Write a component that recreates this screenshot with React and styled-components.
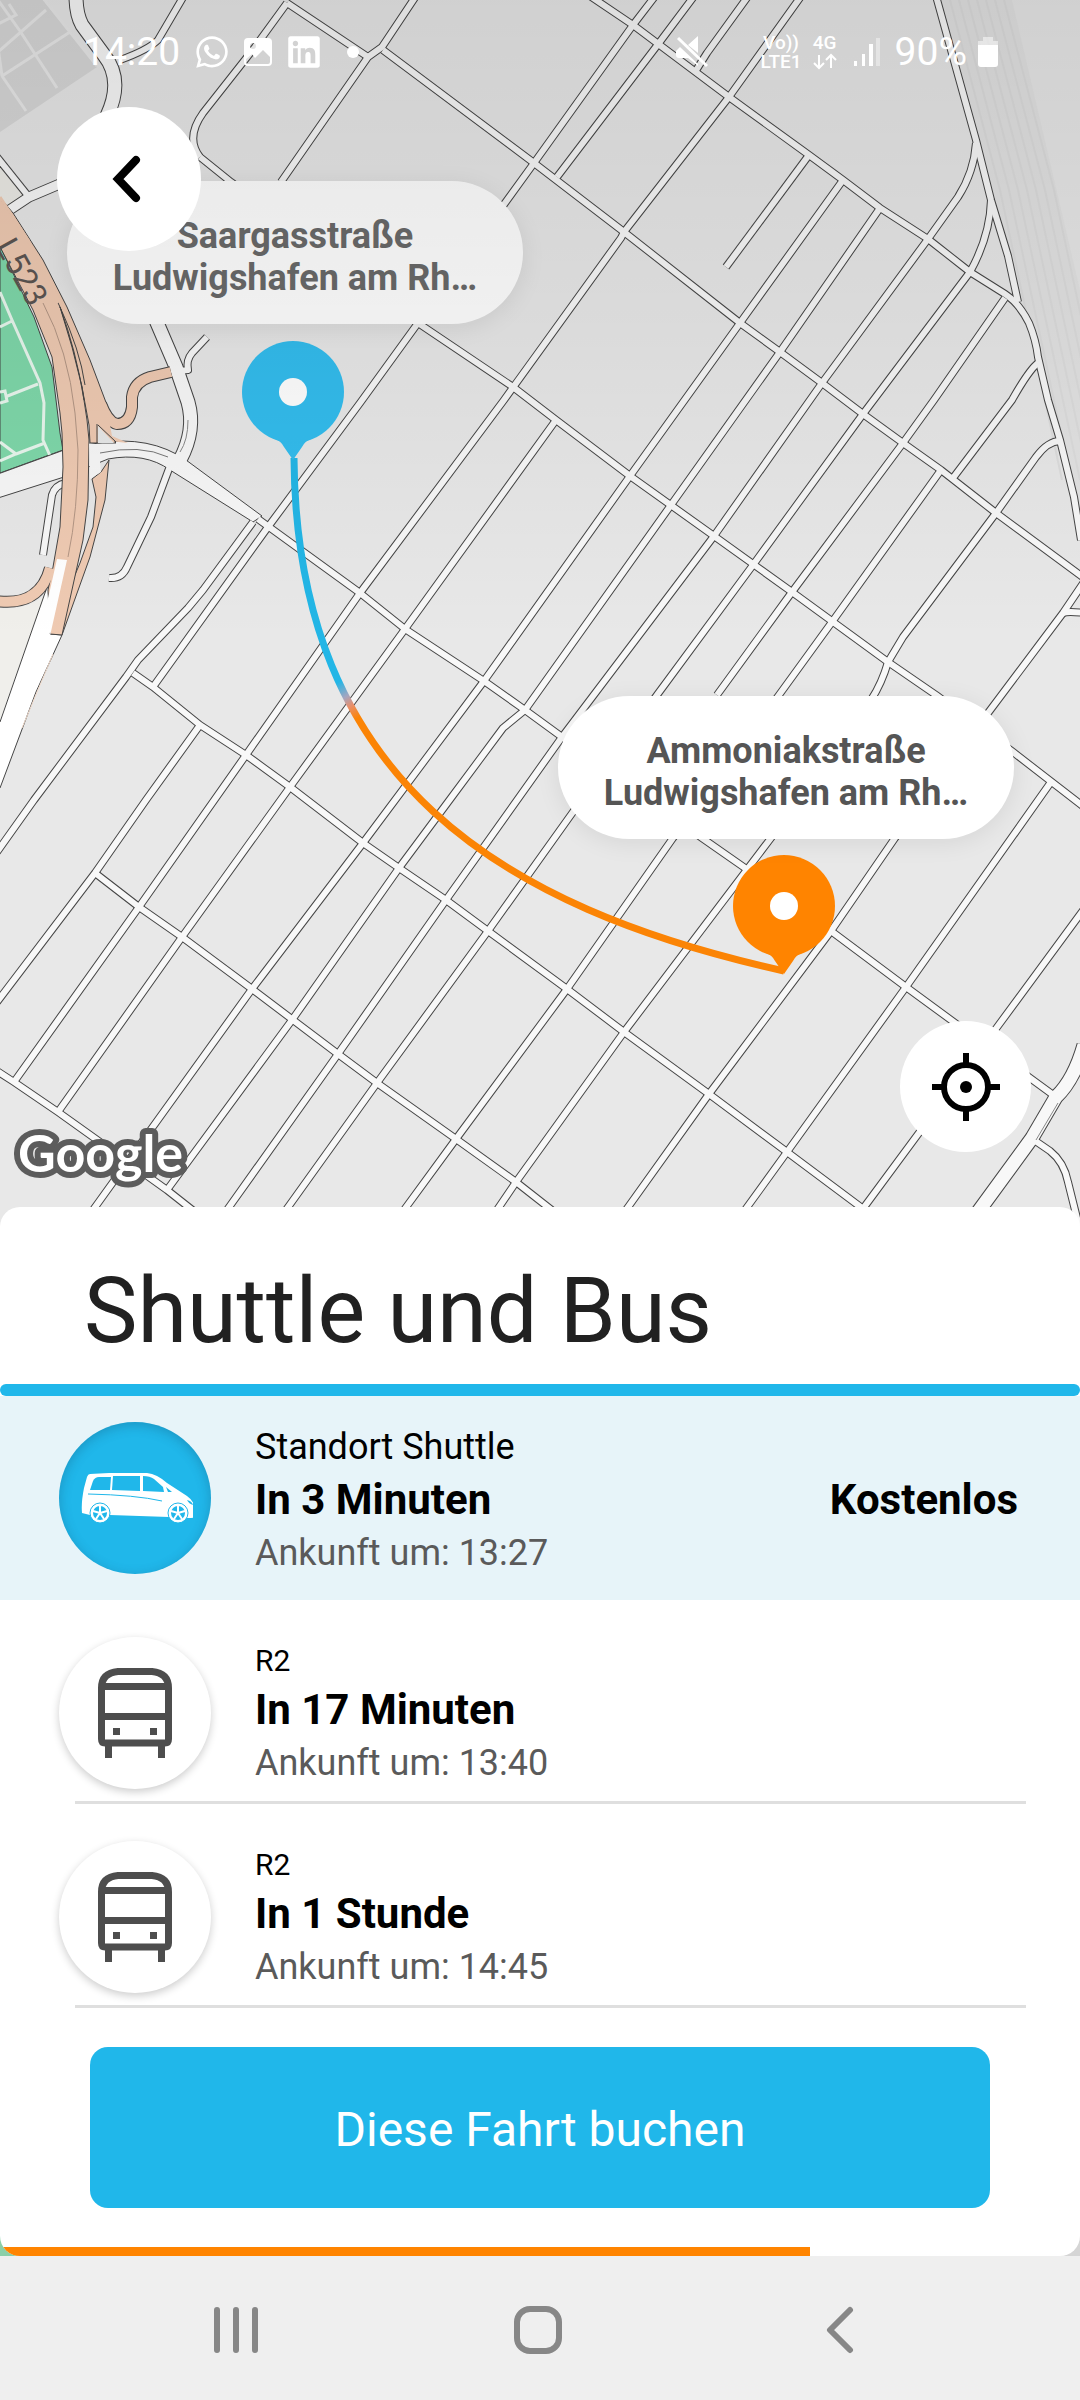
import React from 'react';
import styled, { createGlobalStyle } from 'styled-components';
import { FaLinkedin, FaWhatsapp } from 'react-icons/fa';

const GlobalStyle = createGlobalStyle`
  * {
    box-sizing: border-box;
  }
  body {
    margin: 0;
    font-family: Roboto, "Liberation Sans", sans-serif;
    background: #efefef;
  }
  button {
    border: none;
    padding: 0;
    font-family: inherit;
    cursor: pointer;
  }
`;

const Screen = styled.div`
  display: flex;
  flex-direction: column;
  min-height: 100vh;
`;

const MapArea = styled.section`
  position: relative;
  flex: 1;
  min-height: 1080px;
  overflow: hidden;
  background: #e7e8e8;
`;

const MapCanvas = styled.svg`
  position: absolute;
  top: 0;
  left: 0;
  width: 100%;
  height: 100%;
`;

const Shade = styled.div`
  position: absolute;
  top: 0;
  left: 0;
  right: 0;
  height: 640px;
  background: linear-gradient(rgba(0, 0, 0, 0.1), rgba(0, 0, 0, 0.06) 50%, rgba(0, 0, 0, 0));
`;

const PlaceLabel = styled.div`
  position: absolute;
  left: ${(props) => props.$x}px;
  top: ${(props) => props.$y}px;
  width: 456px;
  padding: 34px 40px 25px;
  border-radius: 72px;
  background: #fff;
  box-shadow: 0 4px 24px rgba(0, 0, 0, 0.08);
  color: ${(props) => (props.$dimmed ? '#6a6a6a' : '#555')};
  font-size: 36px;
  font-weight: 700;
  line-height: 42px;
  text-align: center;
  white-space: nowrap;
`;

const Overlay = styled.div`
  position: relative;
`;

const StatusBar = styled.header`
  display: flex;
  align-items: center;
  justify-content: space-between;
  height: 103px;
  padding: 0 82px 0 83px;
  color: #fff;
  font-size: 39px;
`;

const StatusGroup = styled.div`
  display: flex;
  align-items: center;
  gap: ${(props) => props.$gap}px;
`;

const Network = styled.div`
  display: flex;
  flex-direction: column;
  align-items: center;
  font-size: 19px;
  font-weight: 500;
  line-height: 19px;
`;

const BackButton = styled.button`
  display: flex;
  align-items: center;
  justify-content: center;
  width: 144px;
  height: 144px;
  margin: 4px 0 0 57px;
  border-radius: 50%;
  background: #fff;
`;

const LocateButton = styled.button`
  position: absolute;
  right: 49px;
  bottom: 79px;
  display: flex;
  align-items: center;
  justify-content: center;
  width: 131px;
  height: 131px;
  border-radius: 50%;
  background: #fff;
`;

const SheetBack = styled.div`
  margin-top: -24px;
  position: relative;
  background: linear-gradient(transparent 50%, #8bcfa8 50%) left / 50% no-repeat,
    linear-gradient(transparent 50%, #d5d5d5 50%) right / 50% no-repeat;
`;

const Sheet = styled.main`
  border-radius: 20px;
  overflow: hidden;
  background: #fff;
`;

const Title = styled.h1`
  margin: 0;
  padding: 52px 84px 20px;
  color: #212121;
  font-size: 90px;
  font-weight: 400;
  line-height: 105px;
`;

const Accent = styled.div`
  height: 12px;
  border-radius: 6px;
  background: #20b7ea;
`;

const RideList = styled.ul`
  list-style: none;
  margin: 0;
  padding: 0;
`;

const RideItem = styled.li`
  background: ${(props) => (props.$active ? '#e7f4f9' : '#fff')};
  &::after {
    content: '';
    display: ${(props) => (props.$active ? 'none' : 'block')};
    height: 3px;
    margin: 0 54px 0 75px;
    background: #dfdfdf;
  }
`;

const RideButton = styled.button`
  display: flex;
  align-items: center;
  width: 100%;
  min-height: ${(props) => (props.$active ? 204 : 201)}px;
  padding: ${(props) => (props.$active ? '0 62px 0 59px' : '37px 62px 12px 59px')};
  background: none;
  color: #000;
  text-align: left;
`;

const RideIcon = styled.span`
  display: flex;
  align-items: center;
  justify-content: center;
  flex: none;
  width: 152px;
  height: 152px;
  margin-right: 44px;
  border-radius: 50%;
  background: ${(props) => (props.$active ? '#20b7ea' : '#fff')};
  box-shadow: ${(props) => (props.$active
    ? 'inset 0 3px 12px rgba(20, 70, 100, 0.3)'
    : '0 3px 8px rgba(0, 0, 0, 0.2)')};
`;

const RideText = styled.span`
  display: flex;
  flex-direction: column;
  flex: 1;
  padding-top: ${(props) => (props.$active ? 4 : 2)}px;
`;

const RideName = styled.span`
  font-size: ${(props) => (props.$active ? 36 : 30)}px;
  line-height: ${(props) => (props.$active ? 52 : 44)}px;
`;

const RideTime = styled.span`
  font-size: 42px;
  font-weight: 700;
  line-height: 54px;
`;

const RidePrice = styled(RideTime)`
  padding-top: 4px;
`;

const RideArrival = styled.span`
  color: #5a5a5a;
  font-size: 36px;
  line-height: 52px;
`;

const BookButton = styled.button`
  display: block;
  width: calc(100% - 180px);
  height: 161px;
  margin: 39px 90px;
  padding-top: 3px;
  border-radius: 18px;
  background: #20b7ea;
  color: #fff;
  font-size: 48px;
`;

const Progress = styled.div`
  width: 75%;
  height: 9px;
  background: #ff8400;
`;

const NavBar = styled.nav`
  display: flex;
  height: 144px;
  padding: 3px 89px 0 85px;
  background: #efefef;
`;

const NavButton = styled.button`
  display: flex;
  align-items: center;
  justify-content: center;
  flex: 1;
  background: none;
`;

const streets = [
  // north-west to south-east
  'M287 3L368 57M383 50L534 163L624 232L740 323L780 352L822 383L863 414L903 443L941 470L996 513L1084 578',
  'M590 -4L633 25L729 97L809 155L843 180L880 208L928 239L970 272L1005 294Q1019 303 1029 323Q1036 340 1038 357L1048 400L1060 440L1074 497L1081 540',
  'M200 157L231 182L418 323L513 387L556 420L630 476L714 536L792 592L888 662L936 695L1013 752L1084 807',
  'M258 519L360 593L405 629L484 681L525 710L562 737L702 838L745 868L831 931L906 987L1056 1097',
  'M133 673L153 687L200 725L246 755L290 787L363 843L399 868L446 900L488 931L567 989L624 1032L709 1094L787 1152L870 1214',
  'M95 873L139 907L182 937L252 989L338 1054L377 1083L456 1139L516 1182L590 1240',
  'M-3 1071L14 1082L58 1112L100 1142L167 1190L200 1216',
  // north-east to south-west
  'M185 -6L158 40Q148 50 120 60',
  'M287 3L255 47L203 113Q185 138 200 157',
  'M416 -4L382 47L368 57L281 182',
  'M656 -5L633 25L534 163L418 323L360 403L268 527L153 687',
  'M695 -5L659 43L557 177',
  'M749 -5L707 53L695 72',
  'M802 -5L729 97L624 232L621 238L504 400L360 593L246 755L139 907L14 1082',
  'M809 155L726 267',
  'M843 180L740 323L630 476L484 681L363 843L252 989L93 1210',
  'M556 420L405 629L290 787L182 937L58 1112',
  'M880 208L780 352L671 505L525 710L503 728L451 798L399 868L292 1020L167 1190',
  'M976 143Q974 172 958 197L928 239L822 383L714 536L562 737L446 900L338 1054L227 1210',
  'M991 200Q990 236 970 272L863 414L753 565L657 695L573 812L488 931L377 1083L286 1210',
  'M1005 298L934 400L903 443L792 592L717 695',
  'M1038 363Q1029 370 1012 400L953 478',
  'M941 470L832 622L779 695L673 838L567 989L456 1139L404 1210',
  'M1060 441Q1048 441 1036 457L996 513L903 637L888 662Q882 683 871 700L771 838L624 1032L516 1182L497 1210',
  'M1084 582L1063 613L988 713L895 838L831 931L709 1094L626 1210',
  'M1063 613Q1068 611 1084 613',
  'M1051 782L906 987L787 1152L745 1210',
  'M1084 909L995 1030L862 1210',
  'M1034 1140L1050 1151Q1064 1162 1068 1182L1080 1230',
  'M936 -4L976 140L991 200L1008 256L1018 302',
  'M253 522L203 590L188 608L138 660L126 677L34 800L-3 852',
  'M200 725L146 800L95 873L-3 1002',
  // short connections on the west side
  'M-3 157L29 197',
  'M207 337L192 353Q186 360 188 370L178 371',
  'M170 466L151 517L127 567Q122 579 109 578',
  'M66 483Q55 485 52 495L43 555',
];

const avenues = [
  'M76 -4Q76 14 82 25L104 55Q124 80 107 116',
  'M155 318L176 367L188 402Q196 430 180 460',
  'M1084 1045Q1074 1080 1056 1097L1032 1138L978 1212',
];

const ramps = [
  'M171 372L150 377Q134 382 132 397V407Q130 424 117 424Q108 422 101 404',
  'M-4 601Q40 607 50 568',
];

// the two carriageways of the L523
const carriageways = [
  'M-2 195L13 213L43 260L67 307L90 360L110 413L98 425L116 443H90L89 425L82 387L72 347L60 307L-2 240Z',
  'M101 472L109 460L105 500L90 557L62 635L50 634L80 563L93 527L96 497L92 479Z',
  'M-2 195L28 240L60 307L72 347L82 387L87 420L89 440L88 500L83 540L62 635L50 634L48 590L53 567L60 527L63 467L62 433L60 413L52 357L33 310L-2 243Z',
];

const railLines = [0, 9, 18, 27, 36, 45, 54];

function CityMap() {
  return (
    <MapCanvas viewBox="0 0 1080 1231" preserveAspectRatio="xMinYMin slice" aria-hidden="true">
      <defs>
        <linearGradient id="route" gradientUnits="userSpaceOnUse" x1="337" y1="683" x2="358" y2="718">
          <stop offset="0" stopColor="#23b6e6" />
          <stop offset="0.4" stopColor="#a5a5c0" />
          <stop offset="0.65" stopColor="#e88f6c" />
          <stop offset="1" stopColor="#fb8405" />
        </linearGradient>
      </defs>
      <rect width="1080" height="1231" fill="#e8e8e8" />

      <path d="M0 0H43L97 67L0 132Z" fill="#d8d8d8" />
      <path
        d="M-2 24L16 15L9 4M-2 52L46 10M20 31L-2 0M2 76L70 32M20 31L57 88M2 76L26 111M2 76L-3 40M43 -2L97 66"
        fill="none"
        stroke="#e9e9e9"
        strokeWidth="3"
      />
      <path d="M940 0H1012L1080 290V520Z" fill="#e3e3e3" />
      <g fill="none" stroke="#dddddd" strokeWidth="2">
        {railLines.map((x) => (
          <path key={x} d={`M${950 + x} 0L${1000 + x} 190L${1062 + x} 480`} />
        ))}
      </g>

      <path d="M0 608Q28 610 45 595L0 724Z" fill="#f0efeb" />
      <path d="M0 160L28 197L0 215Z" fill="#ecebe6" />
      <path d="M0 246L34 317L52 367L60 433L63 450L0 473Z" fill="#7fd8aa" stroke="#444" />
      <path
        d="M0 292L12 320L40 383L44 403L43 440L51 458M0 327L12 321M5 397L38 384M0 392L5 391L7 401L0 403M0 461L16 454L45 443M16 454L0 442"
        fill="none"
        stroke="#e9f7ee"
        strokeWidth="3"
      />

      <g fill="none" strokeLinejoin="round">
        <g stroke="#454545" strokeWidth="8">
          {streets.map((d) => <path key={d} d={d} />)}
        </g>
        <g stroke="#454545" strokeWidth="15">
          {avenues.map((d) => <path key={d} d={d} />)}
        </g>
        <path d="M5 213L29 197L62 183" stroke="#454545" strokeWidth="11" />
        <path
          d="M-2 474L64 450L98 443Q150 435 186 460L262 516L253 522L170 470Q145 452 108 459L64 477L-2 498Z"
          fill="#f8f8f8"
          stroke="#454545"
        />
        <g stroke="#f8f8f8" strokeWidth="6">
          {streets.map((d) => <path key={d} d={d} />)}
        </g>
        <g stroke="#f8f8f8" strokeWidth="13">
          {avenues.map((d) => <path key={d} d={d} />)}
        </g>
        <path d="M5 213L29 197L62 183" stroke="#f8f8f8" strokeWidth="9" />
        <path d="M188 420Q188 440 180 452M1058 1103L1036 1140" stroke="#888" />
        <path d="M46 590L62 635L36 692L0 788V720Z" fill="#fff" />
        <path d="M46 590L0 722M62 635L36 692L0 788" stroke="#454545" />
        <path d="M53 654L22 728" stroke="#f2dccd" />

        <g stroke="#454545" strokeWidth="12">
          {ramps.map((d) => <path key={d} d={d} />)}
        </g>
        <g stroke="#454545" fill="#efcab2">
          {carriageways.map((d) => <path key={d} d={d} />)}
        </g>
        <g stroke="#efcab2" strokeWidth="10">
          {ramps.map((d) => <path key={d} d={d} />)}
        </g>
        <path d="M100 402L108 414L112 436L128 443L100 440L92 400Z" fill="#efcab2" />
        <path d="M98 425L116 442M97 424V443" stroke="#454545" />
        <path d="M98 426L114 443H98Z" fill="#e7e8e8" />
        <path d="M0 197L28 240L58 303" stroke="#efcab2" strokeWidth="3" />
        <path d="M57 559L67 560L50 636L44 614L50 590Z" fill="#fff" />
        <path d="M89 444H100V462L101 472L90 479Z" fill="#f8f8f8" />
        <path d="M100 453Q140 444 168 457" stroke="#777" />
        <path d="M60 307Q76 350 84 400M60 307Q80 350 85 385" stroke="#454545" />
        <path d="M43 303Q68 350 75 413L78 450Q78 510 68 557" stroke="#b39684" />
      </g>
      <text transform="translate(-5 246) rotate(61)" fontSize="32" fill="#5c5552" fontFamily="Roboto, sans-serif">
        L523
      </text>

      <path d="M294 458C296 780 500 908 784 971" fill="none" stroke="url(#route)" strokeWidth="7" />
      <Pin x={293} y={392} color="#33bdee" />
      <Pin x={784} y={906} color="#ff8400" />
      <text
        x="18"
        y="1172"
        fontFamily="Lato, sans-serif"
        fontSize="52"
        fontWeight="700"
        fill="#fff"
        stroke="#5c5c5c"
        strokeWidth="12"
        strokeLinejoin="round"
        paintOrder="stroke"
      >
        Google
      </text>
    </MapCanvas>
  );
}

function Pin({ x, y, color }) {
  return (
    <g transform={`translate(${x} ${y})`}>
      <path d="M-18 47Q-12 49 -9 55L0 68L9 55Q12 49 18 47Z" fill={color} />
      <circle r="51" fill={color} />
      <circle r="14" fill="#fff" />
    </g>
  );
}

function VanIcon() {
  return (
    <svg width="115" height="50" viewBox="0 0 115 50" aria-hidden="true">
      <g transform="translate(3 0)">
        <path
          d="M9 1Q38 -1 66 0Q76 1 86 10L106 23Q113 28 113 34V44Q113 45 107 45L88 44L29 42L9 42L1 40Q0 30 3 15L6 4Q7 1 9 1Z"
          fill="#fff"
        />
        <g fill="#20b7ea">
          <path d="M9 17L12 8Q14 4 18 4H30L29 17Z" />
          <path d="M32 3H59V18L31 17Z" />
          <path d="M62 3Q69 3 73 6L82 14L83 19L62 18Z" />
          <path d="M85 14L91 19H87Z" />
          <path d="M106 27Q111 28 112 32Q108 31 106 27Z" />
        </g>
        <path d="M7 21Q55 22 81 28" fill="none" stroke="#20b7ea" />
        {[19, 97].map((x) => (
          <g key={x} transform={`translate(${x} 40)`}>
            <circle r="10" fill="#fff" stroke="#20b7ea" />
            <circle r="7" fill="#20b7ea" />
            <path d="M0 0V-7M0 0L7 -2M0 0L4 6M0 0L-4 6M0 0L-7 -2" stroke="#fff" strokeWidth="2" />
          </g>
        ))}
      </g>
    </svg>
  );
}

function BusIcon() {
  return (
    <svg width="74" height="90" viewBox="0 0 74 90" aria-hidden="true">
      <path
        d="M20 3.500H54Q70.500 5 70.500 20V71Q70.500 75 67 75H7Q3.500 75 3.500 71V20Q3.500 5 20 3.500ZM4 18.500H70M4 48.500H70"
        fill="none"
        stroke="#4d4d4d"
        strokeWidth="7"
      />
      <path d="M15 60H22V67H15ZM52 60H59V67H52ZM7 76H14V90H7ZM60 76H67V90H60Z" fill="#4d4d4d" />
    </svg>
  );
}

const rides = [
  { id: 1, name: 'Standort Shuttle', time: 'In 3 Minuten', arrival: '13:27', price: 'Kostenlos', active: true },
  { id: 2, name: 'R2', time: 'In 17 Minuten', arrival: '13:40' },
  { id: 3, name: 'R2', time: 'In 1 Stunde', arrival: '14:45' },
];

function Ride({ ride }) {
  const active = Boolean(ride.active);
  return (
    <RideItem $active={active}>
      <RideButton type="button" $active={active} aria-pressed={active}>
        <RideIcon $active={active}>{active ? <VanIcon /> : <BusIcon />}</RideIcon>
        <RideText $active={active}>
          <RideName $active={active}>{ride.name}</RideName>
          <RideTime>{ride.time}</RideTime>
          <RideArrival>{`Ankunft um: ${ride.arrival}`}</RideArrival>
        </RideText>
        {ride.price && <RidePrice>{ride.price}</RidePrice>}
      </RideButton>
    </RideItem>
  );
}

function Status() {
  return (
    <StatusBar>
      <StatusGroup $gap={14}>
        <span>14:20</span>
        <FaWhatsapp size={36} />
        <svg width="28" height="28" viewBox="0 0 28 28" aria-hidden="true">
          <rect x="1" y="1" width="26" height="26" rx="3" fill="none" stroke="#fff" strokeWidth="2" />
          <path d="M1 2H27V20L19 12L11 20L8 16L1 22ZM9 5A3 3 0 1 0 9 11A3 3 0 1 0 9 5Z" fill="#fff" fillRule="evenodd" />
        </svg>
        <FaLinkedin size={36} />
        <svg width="44" height="12" viewBox="0 0 44 12" aria-hidden="true">
          <circle cx="17" cy="6" r="6" fill="#fff" />
        </svg>
      </StatusGroup>
      <StatusGroup $gap={11}>
        <svg width="74" height="32" viewBox="0 0 74 32" aria-hidden="true">
          <path d="M12 9L22 0V17ZM0 15L4 11L22 28V30L12 22H3Q0 22 0 19Z" fill="#fff" />
          <path d="M2 2L31 30" stroke="#fff" strokeWidth="3" />
        </svg>
        <Network>
          <span>Vo))</span>
          <span>LTE1</span>
        </Network>
        <Network>
          <span>4G</span>
          <svg width="24" height="19" viewBox="0 0 24 19" aria-hidden="true">
            <path d="M6 3V16M1 11L6 16L11 11M18 16V3M13 8L18 3L23 8" fill="none" stroke="#fff" strokeWidth="2" />
          </svg>
        </Network>
        <svg width="36" height="30" viewBox="0 0 36 30" aria-hidden="true">
          <path d="M6 24H9V29H6ZM14 17H17V29H14ZM21 7H25V29H21Z" fill="#fff" />
          <path d="M28 1H32V29H28Z" fill="#fff" opacity="0.4" />
        </svg>
        <span>90%</span>
        <svg width="20" height="32" viewBox="0 0 20 32" aria-hidden="true">
          <path d="M5 1H15V5H20V12H0V5H5Z" fill="#fff" opacity="0.5" />
          <path d="M0 9H20V28Q20 31 17 31H3Q0 31 0 28Z" fill="#fff" />
        </svg>
      </StatusGroup>
    </StatusBar>
  );
}

export default function App() {
  return (
    <>
      <GlobalStyle />
      <Screen>
        <MapArea>
          <CityMap />
          <PlaceLabel $x={67} $y={181} $dimmed>
            Saargasstraße
            <br />
            Ludwigshafen am Rh…
          </PlaceLabel>
          <PlaceLabel $x={558} $y={696}>
            Ammoniakstraße
            <br />
            Ludwigshafen am Rh…
          </PlaceLabel>
          <Shade />
          <Overlay>
            <Status />
            <BackButton type="button" aria-label="Zurück">
              <svg width="36" height="52" viewBox="0 0 36 52" aria-hidden="true">
                <path d="M25 7L7 26L25 45" fill="none" stroke="#000" strokeWidth="8" strokeLinecap="round" />
              </svg>
            </BackButton>
          </Overlay>
          <LocateButton type="button" aria-label="Mein Standort">
            <svg width="70" height="70" viewBox="0 0 70 70" fill="none" stroke="#000" strokeWidth="6" aria-hidden="true">
              <circle cx="35" cy="35" r="22" />
              <circle cx="35" cy="35" r="6" fill="#000" stroke="none" />
              <path d="M35 1V12M35 58V69M1 35H12M58 35H69" />
            </svg>
          </LocateButton>
        </MapArea>
        <SheetBack>
          <Sheet>
            <Title>Shuttle und Bus</Title>
            <Accent />
            <RideList>
              {rides.map((ride) => <Ride key={ride.id} ride={ride} />)}
            </RideList>
            <BookButton type="button">Diese Fahrt buchen</BookButton>
            <Progress />
          </Sheet>
        </SheetBack>
        <NavBar>
          <NavButton type="button" aria-label="Letzte Apps">
            <svg width="44" height="48" viewBox="0 0 44 48" aria-hidden="true">
              <path d="M3 4V44M22 4V44M41 4V44" stroke="#878787" strokeWidth="6" strokeLinecap="round" />
            </svg>
          </NavButton>
          <NavButton type="button" aria-label="Startseite">
            <svg width="50" height="50" viewBox="0 0 50 50" aria-hidden="true">
              <rect x="4" y="4" width="42" height="42" rx="13" fill="none" stroke="#878787" strokeWidth="6" />
            </svg>
          </NavButton>
          <NavButton type="button" aria-label="Zurück">
            <svg width="30" height="48" viewBox="0 0 30 48" aria-hidden="true">
              <path d="M25 4L5 24L25 44" fill="none" stroke="#878787" strokeWidth="6" strokeLinecap="round" strokeLinejoin="round" />
            </svg>
          </NavButton>
        </NavBar>
      </Screen>
    </>
  );
}
